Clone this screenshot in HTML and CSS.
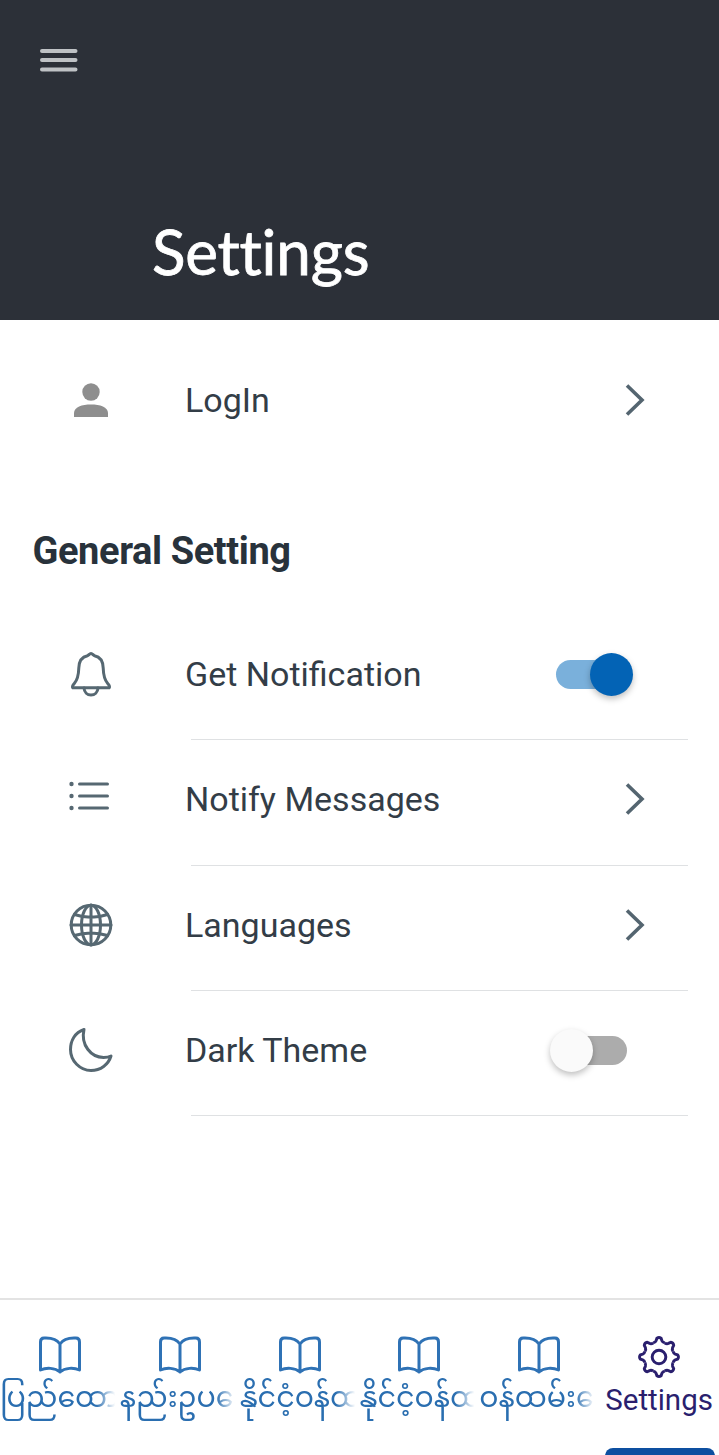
FILE: index.html
```html
<!DOCTYPE html>
<html lang="my">
<head>
    <meta charset="UTF-8">
    <meta name="viewport" content="width=device-width, initial-scale=1.0">
    <title>Settings</title>
    <link rel="stylesheet" href="styles.css">
</head>
<body>
    <div class="page">
        <header class="top-bar">
            <button class="menu-btn" type="button" aria-label="Menu">
                <svg width="38" height="24" viewBox="0 0 38 24"><path d="M2 3h33.500M2 12h33.500M2 21.500h33.500" /></svg>
            </button>
            <h1 class="page-title">Settings</h1>
        </header>

        <main class="content">
            <div class="row row-login">
                <div class="row-icon">
                    <svg width="36" height="36" viewBox="0 0 36 36"><circle cx="18" cy="10" r="8.700" fill="#8e8e8e"/><path d="M1 35v-4c0-6 8-8.500 17-8.500S35 25 35 31v4z" fill="#8e8e8e"/></svg>
                </div>
                <div class="row-text">LogIn</div>
                <svg class="chevron" width="22" height="34" viewBox="0 0 22 34"><path d="M3 2.500 18 17 3 31.500"/></svg>
            </div>

            <h2 class="section-title">General Setting</h2>

            <div class="row">
                <div class="row-icon">
                    <svg class="line-icon" width="44" height="46" viewBox="0 0 44 46"><path d="M22 2.500c-1.500 0-2 1.500-3.500 2.300C12.500 6 10 11 9.800 17c-.2 7-1 11.500-4.500 15.500-1.800 2-2.500 3-1.500 4.200h36.400c1-1.200.3-2.200-1.500-4.200-3.500-4-4.300-8.500-4.500-15.500C34 11 31.500 6 25.500 4.800 24 4 23.500 2.500 22 2.500z"/><path d="M15 37c.3 4.500 3.300 7 7 7s6.700-2.500 7-7"/></svg>
                </div>
                <div class="row-text">Get Notification</div>
                <div class="switch switch-on"><span class="knob"></span></div>
            </div>
            <div class="divider"></div>

            <div class="row">
                <div class="row-icon">
                    <svg class="line-icon list-icon" width="44" height="30" viewBox="0 0 44 30"><path d="M10.500 3h28M10.500 15h28M10.500 27h28"/><circle class="dot" cx="2.500" cy="3" r="2.200"/><circle class="dot" cx="2.500" cy="15" r="2.200"/><circle class="dot" cx="2.500" cy="27" r="2.200"/></svg>
                </div>
                <div class="row-text">Notify Messages</div>
                <svg class="chevron" width="22" height="34" viewBox="0 0 22 34"><path d="M3 2.500 18 17 3 31.500"/></svg>
            </div>
            <div class="divider"></div>

            <div class="row">
                <div class="row-icon">
                    <svg class="line-icon" width="44" height="44" viewBox="0 0 44 44"><circle cx="22" cy="22" r="19.800"/><ellipse cx="22" cy="22" rx="9.500" ry="19.800"/><path d="M22 2v40M2 22h40M5.500 11.500c10 3.500 23 3.500 33 0M5.500 32.500c10-3.500 23-3.500 33 0"/></svg>
                </div>
                <div class="row-text">Languages</div>
                <svg class="chevron" width="22" height="34" viewBox="0 0 22 34"><path d="M3 2.500 18 17 3 31.500"/></svg>
            </div>
            <div class="divider"></div>

            <div class="row">
                <div class="row-icon">
                    <svg class="line-icon" width="44" height="46" viewBox="0 0 44 46"><path d="M15 2.500C6 5.500 1.500 13.500 1.500 22.500c0 11.500 9.500 21 20.500 21 9.500 0 17.500-6 20-14.500-2 1-4.500 1.400-7.500 1.400C22 30.400 11.500 18 15 2.500z"/></svg>
                </div>
                <div class="row-text">Dark Theme</div>
                <div class="switch"><span class="knob"></span></div>
            </div>
            <div class="divider"></div>
        </main>

        <nav class="tab-bar">
            <div class="tab">
                <svg class="book" width="44" height="38" viewBox="0 0 44 38"><path d="M22 8C19 3.500 14 2 8 2H6C3.500 2 2.500 3.500 2.500 6v28c5.500-2.500 14.500-2.500 19.500 2 5-4.500 14-4.500 19.500-2V6c0-2.500-1-4-3.500-4h-2c-6 0-11 1.500-14 6v28"/></svg>
                <div class="tab-label">ပြည်ထောင်စု</div>
            </div>
            <div class="tab">
                <svg class="book" width="44" height="38" viewBox="0 0 44 38"><path d="M22 8C19 3.500 14 2 8 2H6C3.500 2 2.500 3.500 2.500 6v28c5.500-2.500 14.500-2.500 19.500 2 5-4.500 14-4.500 19.500-2V6c0-2.500-1-4-3.500-4h-2c-6 0-11 1.500-14 6v28"/></svg>
                <div class="tab-label">နည်းဥပဒေများ</div>
            </div>
            <div class="tab">
                <svg class="book" width="44" height="38" viewBox="0 0 44 38"><path d="M22 8C19 3.500 14 2 8 2H6C3.500 2 2.500 3.500 2.500 6v28c5.500-2.500 14.500-2.500 19.500 2 5-4.500 14-4.500 19.500-2V6c0-2.500-1-4-3.500-4h-2c-6 0-11 1.500-14 6v28"/></svg>
                <div class="tab-label">နိုင်ငံ့ဝန်ထမ်း</div>
            </div>
            <div class="tab">
                <svg class="book" width="44" height="38" viewBox="0 0 44 38"><path d="M22 8C19 3.500 14 2 8 2H6C3.500 2 2.500 3.500 2.500 6v28c5.500-2.500 14.500-2.500 19.500 2 5-4.500 14-4.500 19.500-2V6c0-2.500-1-4-3.500-4h-2c-6 0-11 1.500-14 6v28"/></svg>
                <div class="tab-label">နိုင်ငံ့ဝန်ထမ်း</div>
            </div>
            <div class="tab">
                <svg class="book" width="44" height="38" viewBox="0 0 44 38"><path d="M22 8C19 3.500 14 2 8 2H6C3.500 2 2.500 3.500 2.500 6v28c5.500-2.500 14.500-2.500 19.500 2 5-4.500 14-4.500 19.500-2V6c0-2.500-1-4-3.500-4h-2c-6 0-11 1.500-14 6v28"/></svg>
                <div class="tab-label">ဝန်ထမ်းရေးရာ</div>
            </div>
            <div class="tab tab-active">
                <svg class="gear" width="42" height="42" viewBox="0 0 40 40">
                    <defs><path id="tooth" d="M14.450 6.600Q16.500 6.200 17.200 4.500L18 2.200Q20 .8 22 2.200L22.800 4.500Q23.500 6.200 25.550 6.600"/></defs>
                    <use href="#tooth"/>
                    <use href="#tooth" transform="rotate(45 20 20)"/>
                    <use href="#tooth" transform="rotate(90 20 20)"/>
                    <use href="#tooth" transform="rotate(135 20 20)"/>
                    <use href="#tooth" transform="rotate(180 20 20)"/>
                    <use href="#tooth" transform="rotate(225 20 20)"/>
                    <use href="#tooth" transform="rotate(270 20 20)"/>
                    <use href="#tooth" transform="rotate(315 20 20)"/>
                    <circle cx="20" cy="20" r="6.500"/>
                </svg>
                <div class="tab-label">Settings</div>
                <div class="tab-marker"></div>
            </div>
        </nav>
    </div>
</body>
</html>
```

FILE: styles.css
```css
* {
    box-sizing: border-box;
}
body {
    margin: 0;
    background: #fff;
    font-family: Roboto, "Noto Sans", sans-serif;
}
.page {
    display: flex;
    flex-direction: column;
    height: 1455px;
    overflow: hidden;
}

.top-bar {
    height: 320px;
    background: #2c3038;
    padding: 48px 0 0 40px;
    display: flex;
    flex-direction: column;
    justify-content: space-between;
    align-items: flex-start;
}
.menu-btn {
    background: none;
    border: none;
    padding: 0;
    line-height: 0;
}
.menu-btn path {
    stroke: #bfc2c5;
    stroke-width: 4;
    stroke-linecap: round;
    fill: none;
}
.page-title {
    margin: 0 0 33px 112px;
    color: #fff;
    font-family: Lato, "Open Sans", sans-serif;
    font-weight: 400;
    font-size: 62px;
    line-height: 72px;
    letter-spacing: -0.2px;
    -webkit-text-stroke: 0.8px #fff;
}

.content {
    flex: 1;
}
.row {
    display: flex;
    align-items: center;
    height: 118.330px;
    margin-bottom: 6px;
    padding-right: 73px;
}
.row-login {
    height: 160px;
    margin: 0;
}
.row-icon {
    width: 185px;
    padding-right: 3px;
    display: flex;
    justify-content: center;
    flex-shrink: 0;
}
.row-text {
    flex: 1;
    font-size: 34px;
    line-height: 40px;
    color: #333d47;
}
.chevron path {
    fill: none;
    stroke: #546570;
    stroke-width: 3.600;
}
.line-icon path, .line-icon circle, .line-icon ellipse {
    fill: none;
    stroke: #566872;
    stroke-width: 3;
    stroke-linecap: round;
    stroke-linejoin: round;
}
.line-icon .dot {
    fill: #566872;
    stroke: none;
}
.list-icon {
    margin-bottom: 6px;
}
.section-title {
    margin: 0;
    padding: 51px 0 0 32.500px;
    height: 135px;
    font-size: 38px;
    line-height: 40px;
    font-weight: 700;
    letter-spacing: -0.4px;
    color: #28323b;
}
.divider {
    height: 1px;
    margin: 0 31px 0 191px;
    background: #dfe1e3;
}

.switch {
    position: relative;
    width: 71px;
    height: 29px;
    margin-right: 19px;
    border-radius: 15px;
    background: #acacac;
}
.knob {
    position: absolute;
    top: -7px;
    left: -6px;
    width: 43px;
    height: 43px;
    border-radius: 50%;
    background: #fafafa;
    box-shadow: 0 3px 6px rgba(0, 0, 0, 0.25);
}
.switch-on {
    background: #7ab0db;
}
.switch-on .knob {
    left: 34px;
    background: #0363b5;
}

.tab-bar {
    height: 157px;
    border-top: 2px solid #e3e3e3;
    display: grid;
    grid-template-columns: repeat(6, 1fr);
}
.tab {
    display: flex;
    flex-direction: column;
    align-items: center;
    padding-top: 36px;
    min-width: 0;
}
.book path {
    fill: none;
    stroke: #2f72b5;
    stroke-width: 3;
    stroke-linejoin: round;
    stroke-linecap: round;
}
.tab-label {
    width: 100%;
    height: 46px;
    margin-top: 4px;
    overflow: hidden;
    white-space: nowrap;
    font-family: "Noto Sans Myanmar", "Noto Sans", sans-serif;
    font-size: 28.500px;
    line-height: 46px;
    color: #2a6eb0;
    -webkit-mask-image: linear-gradient(to right, #000 80%, transparent 96%);
    mask-image: linear-gradient(to right, #000 80%, transparent 96%);
}
.gear path, .gear circle {
    fill: none;
    stroke: #2a1f6e;
    stroke-width: 2.800;
    stroke-linejoin: round;
}
.tab-active .tab-label {
    height: 40px;
    margin-top: 2px;
    text-align: center;
    font-family: Roboto, sans-serif;
    font-size: 29.500px;
    line-height: 40px;
    color: #2a1f6e;
    -webkit-mask-image: none;
    mask-image: none;
}
.tab-marker {
    width: 110px;
    height: 12px;
    margin-top: auto;
    margin-bottom: -5px;
    margin-left: 2px;
    border-radius: 8px 8px 0 0;
    background: #0d4fa0;
}
```
